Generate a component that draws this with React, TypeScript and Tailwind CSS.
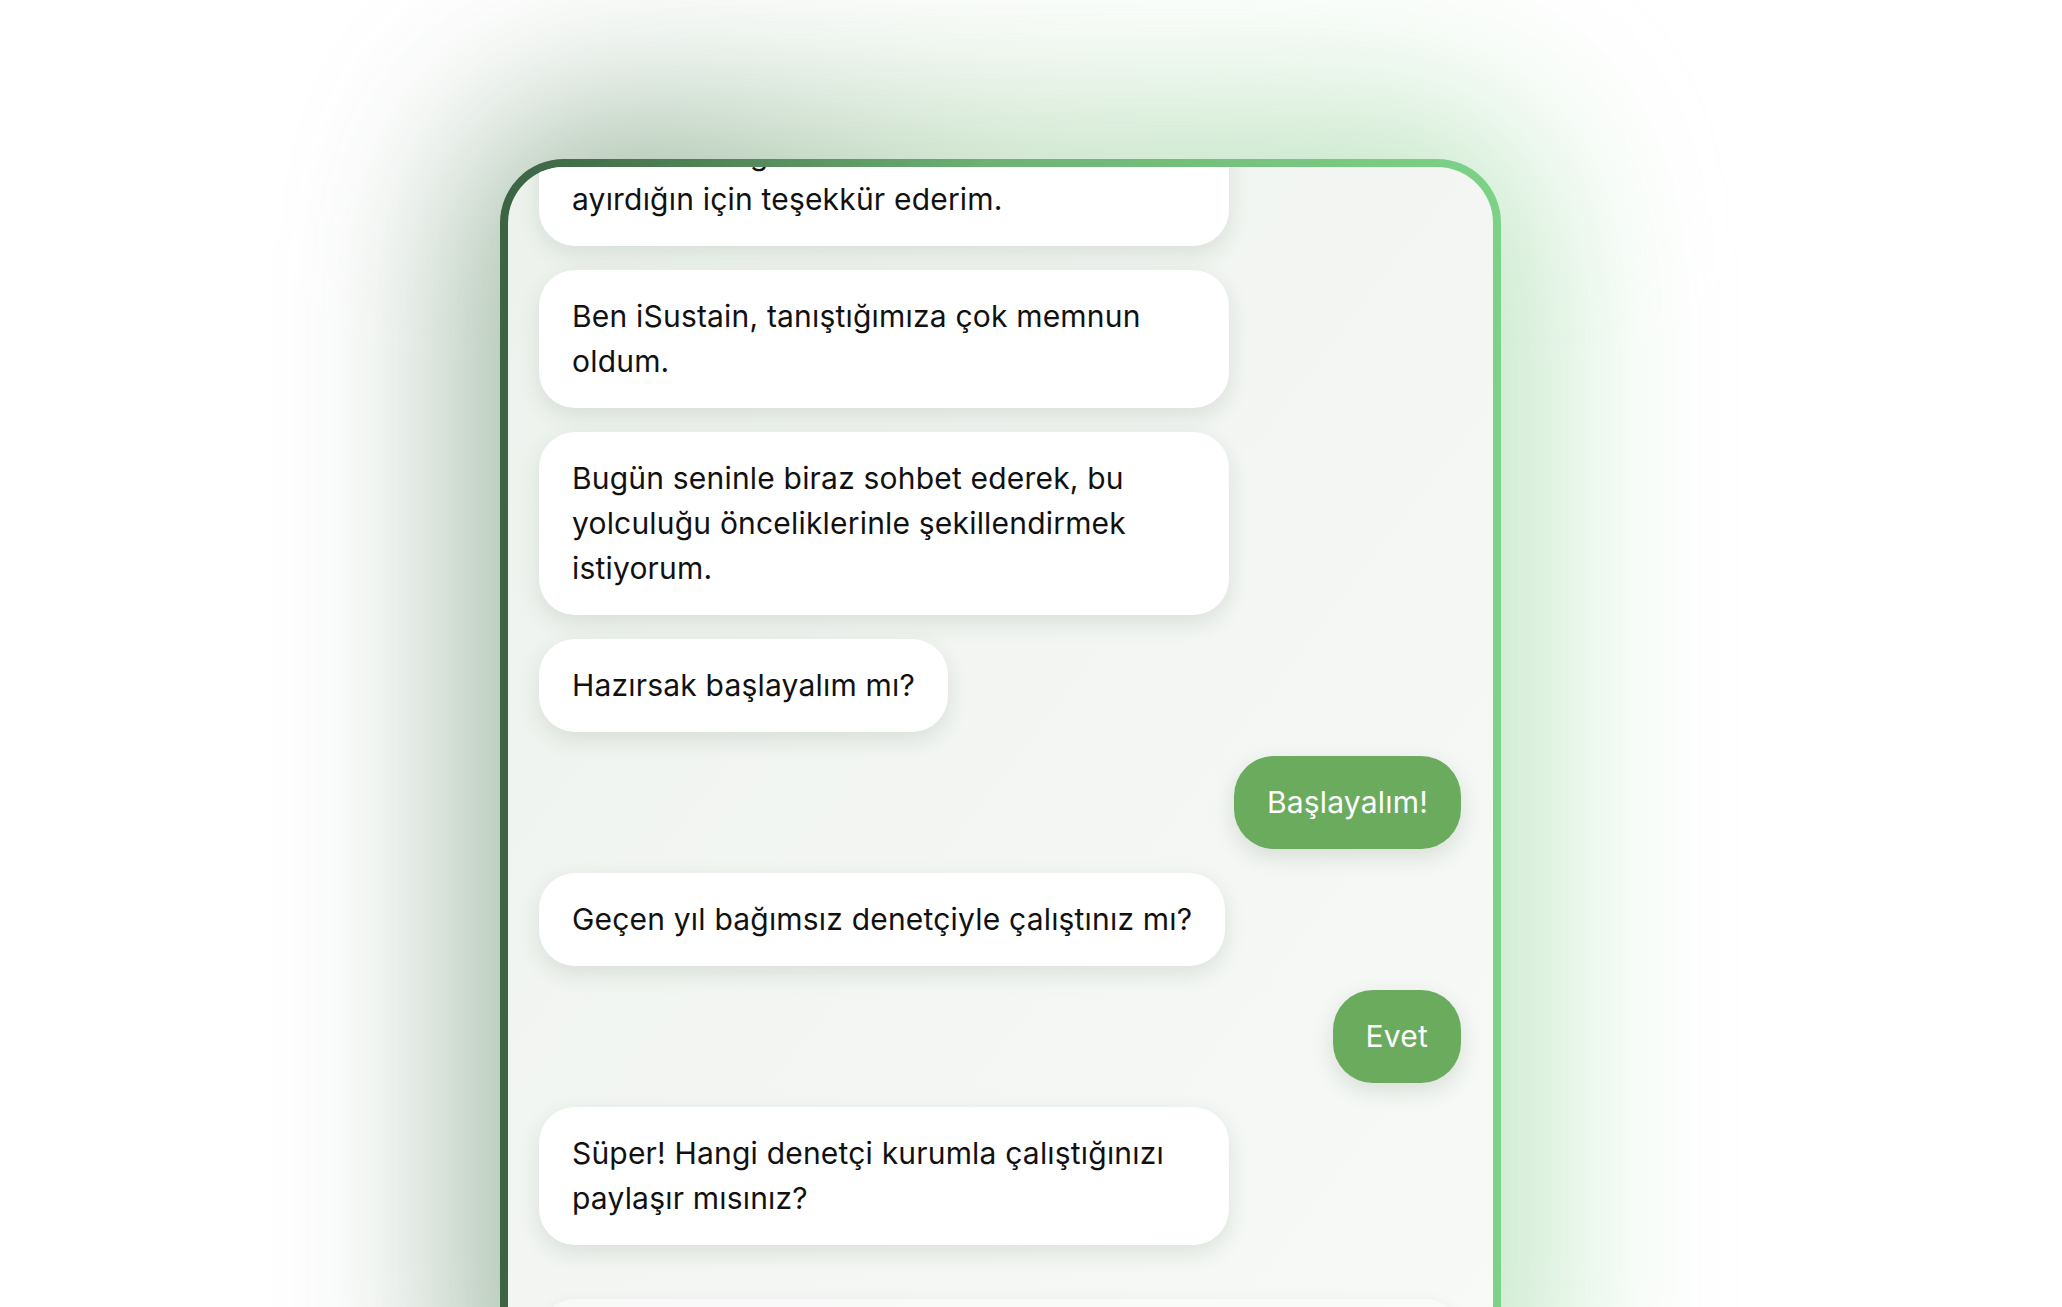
import React from 'react';

type Message = {
  from: 'bot' | 'user';
  text: string;
};

const messages: Message[] = [
  { from: 'bot', text: 'Öncelikle değerli zamanını bu sohbete ayırdığın için teşekkür ederim.' },
  { from: 'bot', text: 'Ben iSustain, tanıştığımıza çok memnun oldum.' },
  {
    from: 'bot',
    text: 'Bugün seninle biraz sohbet ederek, bu yolculuğu önceliklerinle şekillendirmek istiyorum.',
  },
  { from: 'bot', text: 'Hazırsak başlayalım mı?' },
  { from: 'user', text: 'Başlayalım!' },
  { from: 'bot', text: 'Geçen yıl bağımsız denetçiyle çalıştınız mı?' },
  { from: 'user', text: 'Evet' },
  { from: 'bot', text: 'Süper! Hangi denetçi kurumla çalıştığınızı paylaşır mısınız?' },
];

const Bubble: React.FC<{ message: Message }> = ({ message }) => {
  if (message.from === 'user') {
    return (
      <div className="flex justify-end">
        <div className="rounded-[40px] bg-[#6aab5e] px-[33px] py-6 text-[30px] leading-[45px] text-white shadow-[0_8px_22px_rgba(40,70,40,0.14)]">
          {message.text}
        </div>
      </div>
    );
  }

  return (
    <div className="flex justify-start">
      <div className="max-w-[690px] rounded-[36px] bg-white px-[33px] py-6 text-[30px] leading-[45px] text-[#111111] shadow-[0_8px_22px_rgba(40,70,40,0.12)]">
        {message.text}
      </div>
    </div>
  );
};

const App: React.FC = () => {
  return (
    <div
      className="relative h-[1307px] w-full overflow-hidden bg-white"
      style={{ fontFamily: 'Inter, "Noto Sans", sans-serif' }}
    >
      {/* green glow behind the phone frame */}
      <div className="absolute left-[470px] top-[110px] h-[1400px] w-[1070px] rounded-[120px] bg-gradient-to-r from-[#4a7552] via-[#9ccd9b] to-[#8fd497] opacity-60 blur-[90px]" />

      <div className="relative ml-[500px] mt-[159px] w-[1001px]">
        <div className="rounded-t-[64px] bg-gradient-to-r from-[#3b6344] via-[#6fb374] to-[#7dd288] px-[8px] pt-[8px]">
          <div className="h-[1300px] overflow-hidden rounded-t-[56px] bg-gradient-to-br from-[#edf2ed] via-[#f3f6f3] to-[#f7faf7]">
            <div className="-mt-[59px] flex flex-col gap-6 pl-[31px] pr-[32px] tracking-[0.012em]">
              {messages.map((m, i) => (
                <Bubble key={i} message={m} />
              ))}
              <div className="mt-[30px] h-[120px] rounded-[36px] bg-white/40 shadow-[0_-2px_12px_rgba(40,70,40,0.03)]" />
            </div>
          </div>
        </div>
      </div>
    </div>
  );
};

export default App;
